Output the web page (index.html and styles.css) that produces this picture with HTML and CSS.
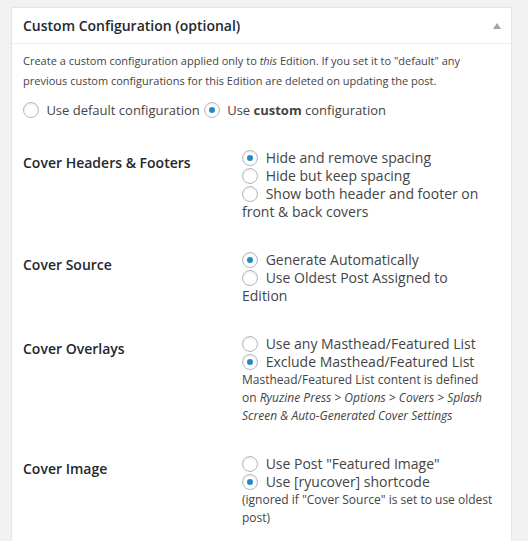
FILE: index.html
```html
<!DOCTYPE html>
<html>
<head>
<meta charset="utf-8">
<link rel="stylesheet" href="styles.css">
</head>
<body>
<div class="postbox">
  <div class="postbox-header">
    <h2 class="hndle">Custom Configuration (optional)</h2>
    <span class="toggle-arrow"></span>
  </div>
  <div class="inside">
    <p class="intro">Create a custom configuration applied only to <em>this</em> Edition. If you set it to "default" any previous custom configurations for this Edition are deleted on updating the post.</p>
    <p class="mode-row">
      <label><input type="radio" name="mode"> Use default configuration</label>
      <label><input type="radio" name="mode" checked> Use <strong>custom</strong> configuration</label>
    </p>
    <table class="form-table">
      <tr>
        <th>Cover Headers &amp; Footers</th>
        <td>
          <label class="opt"><input type="radio" name="hf" checked> Hide and remove spacing</label>
          <label class="opt"><input type="radio" name="hf"> Hide but keep spacing</label>
          <label class="opt"><input type="radio" name="hf"> Show both header and footer on front &amp; back covers</label>
        </td>
      </tr>
      <tr>
        <th>Cover Source</th>
        <td>
          <label class="opt"><input type="radio" name="src" checked> Generate Automatically</label>
          <label class="opt"><input type="radio" name="src"> Use Oldest Post Assigned to Edition</label>
        </td>
      </tr>
      <tr>
        <th>Cover Overlays</th>
        <td>
          <label class="opt"><input type="radio" name="ov"> Use any Masthead/Featured List</label>
          <label class="opt"><input type="radio" name="ov" checked> Exclude Masthead/Featured List</label>
          <span class="note">Masthead/Featured List content is defined on <em>Ryuzine Press &gt; Options &gt; Covers &gt; Splash Screen &amp; Auto-Generated Cover Settings</em></span>
        </td>
      </tr>
      <tr>
        <th>Cover Image</th>
        <td>
          <label class="opt"><input type="radio" name="img"> Use Post "Featured Image"</label>
          <label class="opt"><input type="radio" name="img" checked> Use [ryucover] shortcode</label>
          <span class="note">(ignored if "Cover Source" is set to use oldest post)</span>
        </td>
      </tr>
    </table>
  </div>
</div>
</body>
</html>
```

FILE: styles.css
```css
html, body {
  margin: 0;
  padding: 0;
  background: #f1f1f1;
  font-family: "Open Sans", "Liberation Sans", sans-serif;
  color: #444;
}

body {
  padding: 7px 0 0 11px;
  height: 534px;
  overflow: hidden;
}

.postbox {
  width: 499px;
  background: #fff;
  border: 1px solid #e5e5e5;
  box-shadow: 0 1px 1px rgba(0, 0, 0, 0.04);
  min-height: 560px;
}

.postbox-header {
  display: flex;
  align-items: center;
  justify-content: space-between;
  height: 35px;
  border-bottom: 1px solid #eee;
  padding: 0 10px 0 11px;
}

.hndle {
  margin: 0;
  font-size: 14px;
  font-weight: 600;
  color: #23282d;
  line-height: 1.4;
}

.toggle-arrow {
  width: 0;
  height: 0;
  border-left: 4px solid transparent;
  border-right: 4px solid transparent;
  border-bottom: 6px solid #a0a5aa;
  margin-top: 1px;
}

.inside {
  padding: 7px 11px 12px 11px;
}

.intro {
  margin: 0;
  font-size: 11px;
  line-height: 20px;
}

.mode-row {
  margin: 9px 0 0 0;
  font-size: 13px;
  line-height: 20px;
  display: flex;
  gap: 4px;
}

input[type="radio"] {
  appearance: none;
  -webkit-appearance: none;
  width: 16px;
  height: 16px;
  margin: 0 4px 0 0;
  border: 1px solid #b4b9be;
  border-radius: 50%;
  background: #fff;
  box-shadow: inset 0 1px 2px rgba(0, 0, 0, 0.1);
  vertical-align: -3px;
  position: relative;
  box-sizing: border-box;
}

input[type="radio"]:checked::before {
  content: "";
  position: absolute;
  left: 4px;
  top: 4px;
  width: 6px;
  height: 6px;
  border-radius: 50%;
  background: #1e8cbe;
}

.form-table {
  border-collapse: collapse;
  margin-top: 14px;
  width: 100%;
}

.form-table th {
  width: 200px;
  padding: 20px 10px 20px 0;
  text-align: left;
  vertical-align: top;
  font-size: 14px;
  font-weight: 600;
  color: #23282d;
  line-height: 18px;
}

.form-table td {
  padding: 15px 5px 15px 9px;
  vertical-align: top;
  font-size: 14px;
  line-height: 18px;
}

.opt {
  display: block;
}

.note {
  display: block;
  font-size: 12px;
  line-height: 18px;
}
```
